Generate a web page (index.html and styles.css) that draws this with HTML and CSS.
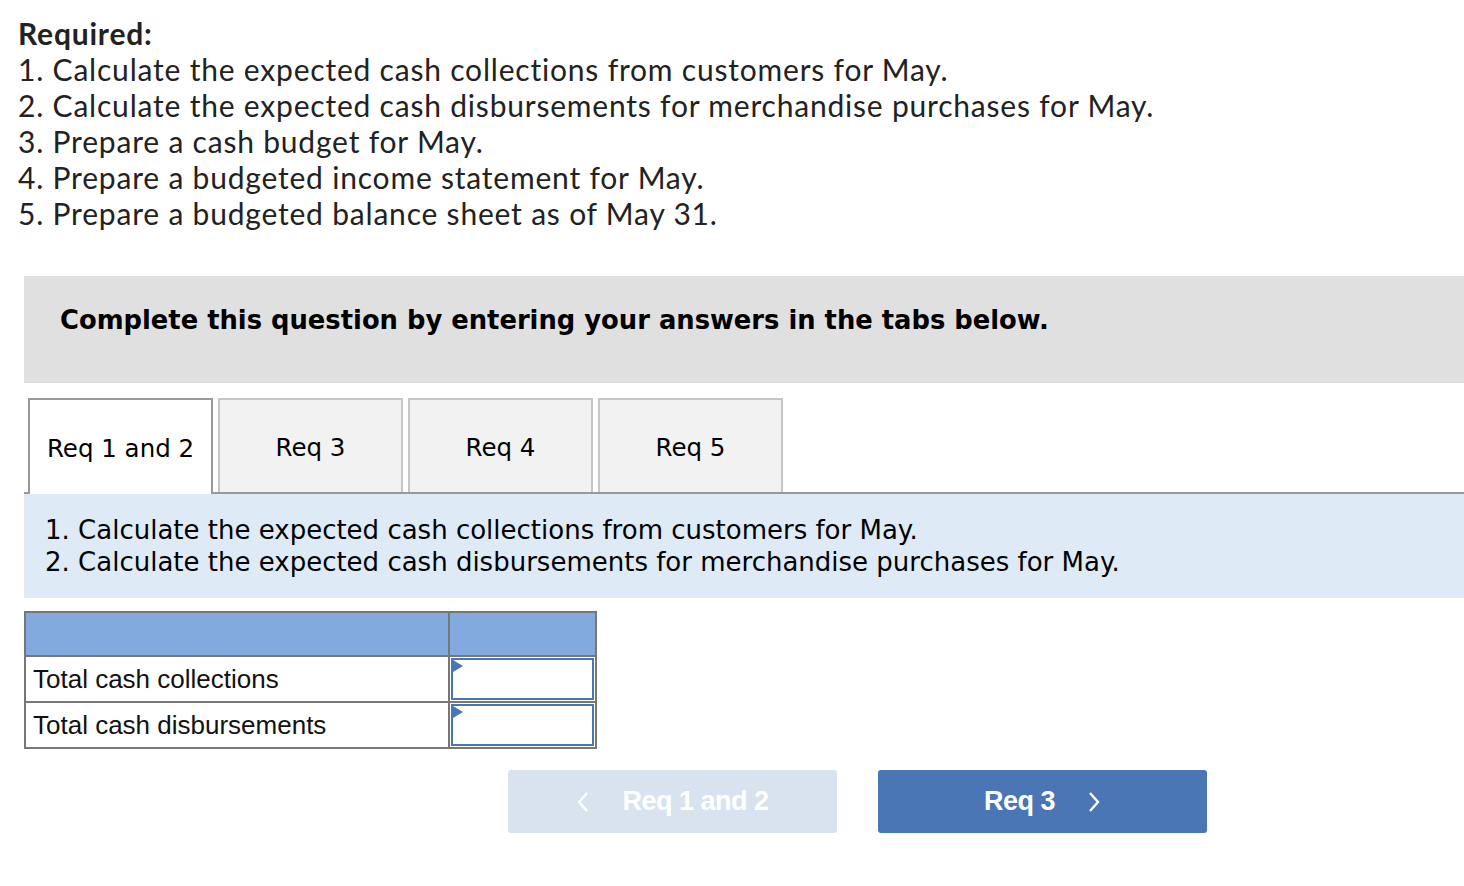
FILE: index.html
```html
<!DOCTYPE html>
<html>
<head>
<meta charset="utf-8">
<link rel="stylesheet" href="styles.css">
</head>
<body>
<div class="required">
  <div class="req-title">Required:</div>
  <div>1. Calculate the expected cash collections from customers for May.</div>
  <div>2. Calculate the expected cash disbursements for merchandise purchases for May.</div>
  <div>3. Prepare a cash budget for May.</div>
  <div>4. Prepare a budgeted income statement for May.</div>
  <div>5. Prepare a budgeted balance sheet as of May 31.</div>
</div>

<div class="instructions">Complete this question by entering your answers in the tabs below.</div>

<div class="tabs">
  <div class="tab active">Req 1 and 2</div>
  <div class="tab">Req 3</div>
  <div class="tab">Req 4</div>
  <div class="tab">Req 5</div>
</div>

<div class="prompt">
  <div>1. Calculate the expected cash collections from customers for May.</div>
  <div>2. Calculate the expected cash disbursements for merchandise purchases for May.</div>
</div>

<div class="answer">
  <div class="cell head"></div>
  <div class="cell head"></div>
  <div class="cell label">Total cash collections</div>
  <div class="cell entry"><div class="input"><span class="tri"></span></div></div>
  <div class="cell label">Total cash disbursements</div>
  <div class="cell entry"><div class="input"><span class="tri"></span></div></div>
</div>

<div class="nav">
  <div class="btn prev"><span class="chev">
    <svg width="14" height="22" viewBox="0 0 14 22"><path d="M11 2 L3 11 L11 20" fill="none" stroke="#fff" stroke-width="2.4"/></svg>
  </span>Req 1 and 2</div>
  <div class="btn next">Req 3<span class="chev right">
    <svg width="14" height="22" viewBox="0 0 14 22"><path d="M3 2 L11 11 L3 20" fill="none" stroke="#fff" stroke-width="2.4"/></svg>
  </span></div>
</div>
</body>
</html>
```

FILE: styles.css
```css
html, body {
  margin: 0;
  padding: 0;
  background: #fff;
}

.required {
  padding: 15px 0 0 18px;
  font-family: "Lato", "Open Sans", sans-serif;
  font-size: 30px;
  letter-spacing: 0.8px;
  line-height: 36px;
  color: #222;
}

.req-title {
  font-weight: 700;
}

.instructions {
  margin: 45px 0 0 24px;
  height: 107px;
  box-sizing: border-box;
  padding: 29px 0 0 36px;
  background: #e0e0e0;
  font-family: "DejaVu Sans", Verdana, sans-serif;
  font-weight: 700;
  font-size: 25.8px;
  line-height: 30px;
  color: #000;
}

.tabs {
  display: flex;
  gap: 5px;
  margin: 15px 0 0 24px;
  padding-left: 4px;
  border-bottom: 2px solid #999;
  height: 94px;
}

.tab {
  width: 185px;
  height: 94px;
  box-sizing: border-box;
  border: 2px solid #c6c6c6;
  border-bottom: none;
  background: #f2f2f2;
  display: flex;
  align-items: center;
  justify-content: center;
  font-family: "DejaVu Sans", Verdana, sans-serif;
  font-size: 24.5px;
  color: #000;
  padding-top: 3px;
}

.tab.active {
  background: #fff;
  border-color: #999;
  height: 96px;
  margin-bottom: -2px;
}

.prompt {
  margin: 0 0 0 24px;
  height: 104px;
  box-sizing: border-box;
  padding: 20px 0 0 21px;
  background: #deebf7;
  font-family: "DejaVu Sans", Verdana, sans-serif;
  font-size: 26px;
  line-height: 32px;
  color: #000;
}

.answer {
  display: grid;
  grid-template-columns: 424px 147px;
  grid-template-rows: 44px 46px 46px;
  width: max-content;
  margin: 13px 0 0 24px;
  border-top: 2px solid #777;
  border-left: 2px solid #777;
  font-family: "Liberation Sans", Arial, sans-serif;
  font-size: 26px;
  color: #111;
}

.cell {
  box-sizing: border-box;
  border-right: 2px solid #777;
  border-bottom: 2px solid #777;
}

.cell.head {
  background: #82aadf;
}

.cell.label {
  display: flex;
  align-items: center;
  padding: 1px 0 0 7px;
}

.cell.entry {
  padding: 1px;
}

.input {
  position: relative;
  height: 100%;
  box-sizing: border-box;
  border: 2px solid #4a76b5;
  background: #fff;
}

.tri {
  position: absolute;
  left: 0;
  top: 0;
  width: 0;
  height: 0;
  border-top: 6px solid transparent;
  border-bottom: 6px solid transparent;
  border-left: 10px solid #4a76b5;
}

.nav {
  display: flex;
  gap: 41px;
  margin: 21px 0 0 508px;
}

.btn {
  width: 329px;
  height: 63px;
  border-radius: 3px;
  display: flex;
  align-items: center;
  justify-content: center;
  font-family: "Liberation Sans", Arial, sans-serif;
  font-weight: 700;
  font-size: 27px;
  color: #fff;
  letter-spacing: -0.5px;
}

.btn.prev {
  background: #d9e3ef;
}

.btn.next {
  background: #4a76b5;
}

.chev {
  display: inline-flex;
  margin-right: 32px;
}

.chev.right {
  margin-right: 0;
  margin-left: 32px;
}
```
